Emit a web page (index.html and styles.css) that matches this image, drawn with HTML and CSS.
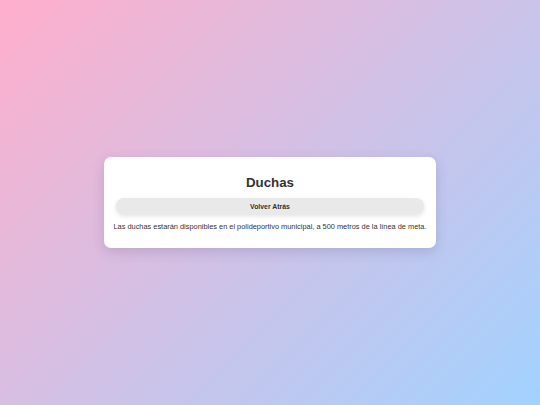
FILE: index.html
```html
<!DOCTYPE html>
<html lang="es">
<head>
    <meta charset="UTF-8">
    <meta name="viewport" content="width=device-width, initial-scale=1.0">
    <title>Duchas</title>
    <link rel="stylesheet" href="styles.css">
</head>
<body>
    <div class="card">
        <h1>Duchas</h1>
        <button class="back-btn" onclick="history.back()">Volver Atrás</button>
        <p class="info">Las duchas estarán disponibles en el polideportivo municipal, a 500 metros de la línea de meta.</p>
    </div>
</body>
</html>
```

FILE: styles.css
```css
html, body {
    height: 100%;
}
body {
    margin: 0;
    font-family: "Liberation Sans", Arial, sans-serif;
    background: linear-gradient(135deg, #ffafcc, #a2d2ff);
    display: flex;
    align-items: center;
    justify-content: center;
}
.card {
    background-color: white;
    padding: 10px 9px;
    border-radius: 7px;
    box-shadow: 0 4px 12px rgba(60, 60, 110, 0.18);
    text-align: center;
    color: #333;
}
h1 {
    font-size: 13.3px;
    margin: 8px 0;
    color: #333;
}
.back-btn {
    display: block;
    box-sizing: border-box;
    width: calc(100% - 6px);
    margin: 0 3px;
    height: 16px;
    padding: 0;
    border: none;
    border-radius: 8px;
    background-color: #e9e9e9;
    box-shadow: 0 2px 5px rgba(0, 0, 0, 0.12);
    font-family: inherit;
    font-size: 6.9px;
    font-weight: bold;
    color: #333;
    cursor: pointer;
}
.info {
    font-size: 7.4px;
    margin: 8px 0 7px;
    white-space: nowrap;
}
```
